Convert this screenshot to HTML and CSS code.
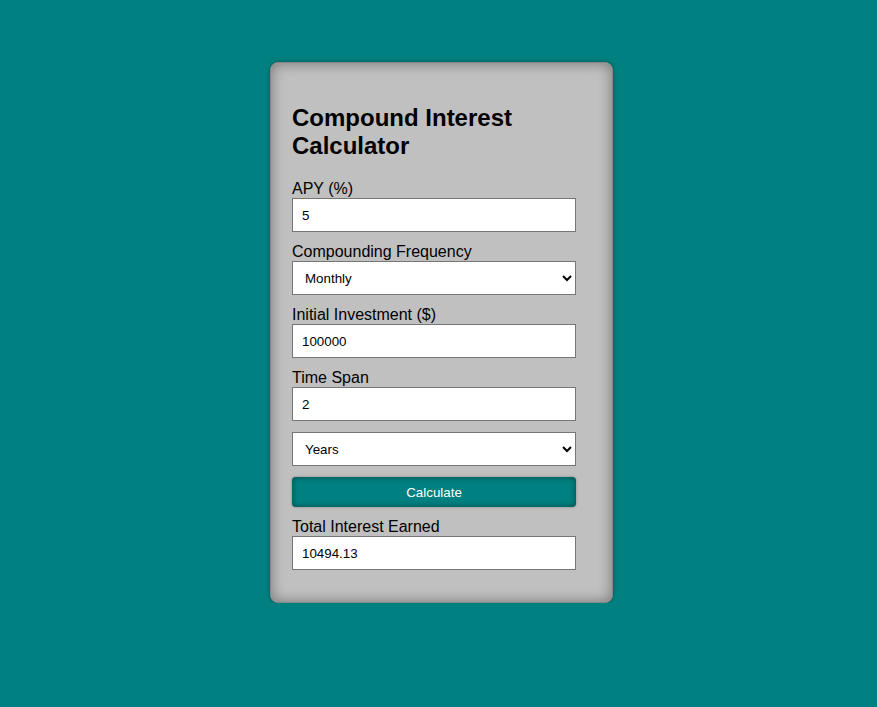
FILE: index.html
```html
<!DOCTYPE html>
<html>
  <head>
    <meta charset="UTF-8" />
    <title>Compound Interest Calculator</title>
    <link rel="stylesheet" href="styles.css">
  </head>
  <body>
    <div class="calculator">
      <h2>Compound Interest Calculator</h2>
      <form id="calc-form">
        <label for="apy">APY (%)</label>
        <input type="text" id="apy" name="apy" value="5" />
        <label for="frequency">Compounding Frequency</label>
        <select id="frequency" name="frequency">
          <option value="1">Annually</option>
          <option value="4">Quarterly</option>
          <option value="12" selected>Monthly</option>
          <option value="365">Daily</option>
        </select>
        <label for="principal">Initial Investment ($)</label>
        <input type="text" id="principal" name="principal" value="100000" />
        <label for="span">Time Span</label>
        <input type="text" id="span" name="span" value="2" />
        <select id="unit" name="unit">
          <option value="years" selected>Years</option>
          <option value="months">Months</option>
        </select>
        <button type="submit" class="calc-btn">Calculate</button>
        <label for="result">Total Interest Earned</label>
        <input type="text" id="result" name="result" value="10494.13" readonly />
      </form>
    </div>
    <script>
      const form = document.getElementById("calc-form");

      form.addEventListener("submit", function (event) {
        event.preventDefault();
        const rate = parseFloat(form.elements["apy"].value) / 100;
        const n = parseFloat(form.elements["frequency"].value);
        const p = parseFloat(form.elements["principal"].value);
        let t = parseFloat(form.elements["span"].value);
        if (form.elements["unit"].value === "months") {
          t = t / 12;
        }
        const total = p * Math.pow(1 + rate / n, n * t);
        form.elements["result"].value = (total - p).toFixed(2);
      });
    </script>
  </body>
</html>
```

FILE: styles.css
```css
body {
  margin: 0;
  padding: 62px 0 0 6px;
  background-color: #008080;
  font-family: "Liberation Sans", Arial, sans-serif;
  display: flex;
  justify-content: center;
}
.calculator {
  box-sizing: border-box;
  width: 343px;
  padding: 21px;
  background-color: #c0c0c0;
  border: 1px solid #888;
  border-radius: 8px;
  box-shadow: inset 0 0 14px rgba(0, 0, 0, 0.4), 0 0 4px rgba(0, 0, 0, 0.35);
}
h2 {
  font-size: 24px;
  margin: 20px 0;
}
label {
  display: block;
  font-size: 16px;
  line-height: 18px;
}
input[type="text"],
select,
.calc-btn {
  display: block;
  box-sizing: border-box;
  width: 95%;
  height: 34px;
  margin: 0 0 11px 0;
  padding: 8px 8px 8px 9px;
  font-family: "Liberation Sans", Arial, sans-serif;
  font-size: 13.33px;
  color: #000;
  background-color: #fff;
  border: 1px solid #767676;
  border-radius: 0;
}
select {
  padding-left: 8px;
}
.calc-btn {
  height: 30px;
  padding: 0;
  color: #fff;
  background-color: #008080;
  border: none;
  border-radius: 4px;
  box-shadow: inset 0 0 6px rgba(0, 0, 0, 0.45), 0 0 3px rgba(0, 0, 0, 0.3);
  cursor: pointer;
}
```
